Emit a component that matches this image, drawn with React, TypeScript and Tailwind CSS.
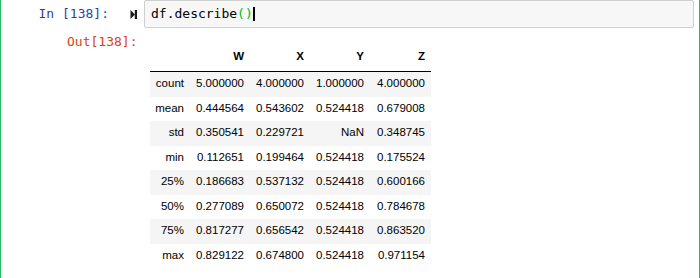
import React from 'react';

const columns = ['W', 'X', 'Y', 'Z'];

const rows: [string, string[]][] = [
    ['count', ['5.000000', '4.000000', '1.000000', '4.000000']],
    ['mean', ['0.444564', '0.543602', '0.524418', '0.679008']],
    ['std', ['0.350541', '0.229721', 'NaN', '0.348745']],
    ['min', ['0.112651', '0.199464', '0.524418', '0.175524']],
    ['25%', ['0.186683', '0.537132', '0.524418', '0.600166']],
    ['50%', ['0.277089', '0.650072', '0.524418', '0.784678']],
    ['75%', ['0.817277', '0.656542', '0.524418', '0.863520']],
    ['max', ['0.829122', '0.674800', '0.524418', '0.971154']],
];

const colWidths = ['w-[60px]', 'w-[60px]', 'w-[60px]', 'w-[61px]'];

const StepForwardIcon: React.FC = () => (
    <svg width="7" height="9" viewBox="0 0 7 9" className="shrink-0 mr-[7px]">
        <polygon points="0.5,0 5,4.5 0.5,9" fill="#1a1a1a" />
        <rect x="4.8" y="0" width="2.2" height="9" fill="#1a1a1a" />
    </svg>
);

export default function App() {
    return (
        <div className="w-[700px] h-[278px] overflow-hidden bg-white border-x border-[#22bd68]">
            {/* input */}
            <div className="flex items-center h-[28px]">
                <div className="w-[143px] shrink-0 flex items-center justify-end">
                    <span
                        className="mr-[21px] text-[13px] leading-[20px] text-[#303f9f]"
                        style={{ fontFamily: '"DejaVu Sans Mono", monospace' }}
                    >
                        In [138]:
                    </span>
                    <StepForwardIcon />
                </div>
                <div
                    className="w-[550px] h-[28px] flex items-center pl-[6px] bg-[#f7f7f7] border border-[#cfcfcf] rounded-[2px] text-[13px] leading-[20px] text-black"
                    style={{ fontFamily: '"DejaVu Sans Mono", monospace' }}
                >
                    <span>df.describe</span>
                    <span className="text-[#0b0]">()</span>
                    <span className="inline-block w-[2px] h-[14px] bg-black" />
                </div>
            </div>

            {/* output */}
            <div className="flex items-start mt-[4px]">
                <div
                    className="w-[143px] shrink-0 text-right pr-[6.5px] text-[13px] leading-[20px] text-[#d84315]"
                    style={{ fontFamily: '"DejaVu Sans Mono", monospace' }}
                >
                    Out[138]:
                </div>
                <div
                    className="ml-[6px] mt-[14px] text-[11.5px] text-black"
                    style={{ fontFamily: '"Liberation Sans", Arial, sans-serif' }}
                >
                    <div className="flex h-[26px] border-b border-black pb-[3px] items-center font-bold">
                        <div className="w-[40px]" />
                        {columns.map((c, i) => (
                            <div key={c} className={`${colWidths[i]} text-right pr-[6px]`}>{c}</div>
                        ))}
                    </div>
                    {rows.map(([label, vals], r) => (
                        <div
                            key={label}
                            className={`flex h-[24.5px] items-center pb-[1px] ${r % 2 === 0 ? 'bg-[#f5f5f5]' : 'bg-white'}`}
                        >
                            <div className="w-[40px] text-right pr-[6px]">{label}</div>
                            {vals.map((v, i) => (
                                <div key={i} className={`${colWidths[i]} text-right pr-[6px]`}>{v}</div>
                            ))}
                        </div>
                    ))}
                </div>
            </div>
        </div>
    );
}
